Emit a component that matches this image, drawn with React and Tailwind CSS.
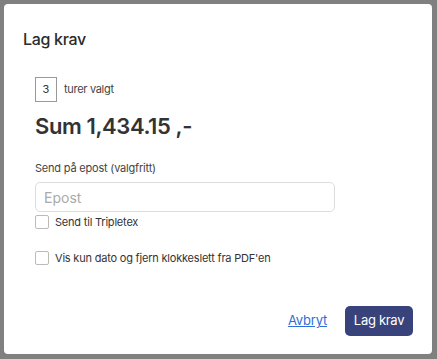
export default function App() {
  return (
    <div className="w-[437px] h-[359px] bg-[#808080] p-1 pr-[5px] pb-[5px]" style={{ fontFamily: 'Inter, "Noto Sans", sans-serif' }}>
      <div className="h-full w-full bg-white rounded-[4px] flex flex-col">
        <h2 className="pl-[19px] pt-[24px] text-[16px] font-medium text-[#2b2b2b] tracking-[-0.3px] leading-[22px]">Lag krav</h2>
        <div className="pl-[31px] pt-[27px] flex flex-col">
          <div className="flex items-center gap-[7px]">
            <div className="w-[22px] h-[25px] border border-[#999] flex items-center justify-center text-[11px] text-[#333]">3</div>
            <span className="text-[11px] text-[#444] tracking-[-0.3px]">turer valgt</span>
          </div>
          <div className="mt-[9px] text-[22px] font-semibold text-[#333] tracking-[-0.4px] leading-[30px]">Sum 1,434.15 ,-</div>
          <label className="mt-[19px] text-[11px] text-[#444] tracking-[-0.2px] leading-[16px]">Send på epost (valgfritt)</label>
          <input
            placeholder="Epost"
            className="mt-[6px] w-[300px] h-[30px] border border-[#ddd] rounded-[5px] px-[8px] text-[14px] placeholder-[#aaa] outline-none"
          />
          <label className="mt-[2px] flex items-center gap-[6px]">
            <span className="w-[14px] h-[14px] border border-[#bbb] rounded-[2px]"></span>
            <span className="text-[11px] text-[#333] tracking-[-0.2px]">Send til Tripletex</span>
          </label>
          <label className="mt-[19px] flex items-center gap-[6px]">
            <span className="w-[14px] h-[14px] border border-[#bbb] rounded-[2px]"></span>
            <span className="text-[11px] text-[#333] tracking-[-0.2px]">Vis kun dato og fjern klokkeslett fra PDF'en</span>
          </label>
        </div>
        <div className="mt-auto mb-[18px] mr-[19px] flex items-center justify-end gap-[18px]">
          <a href="#" className="text-[13px] text-[#2f6fd6] underline tracking-[-0.2px]">Avbryt</a>
          <button className="w-[68px] h-[30px] rounded-[5px] bg-[#37437a] text-white text-[13px] tracking-[-0.3px]">Lag krav</button>
        </div>
      </div>
    </div>
  )
}
